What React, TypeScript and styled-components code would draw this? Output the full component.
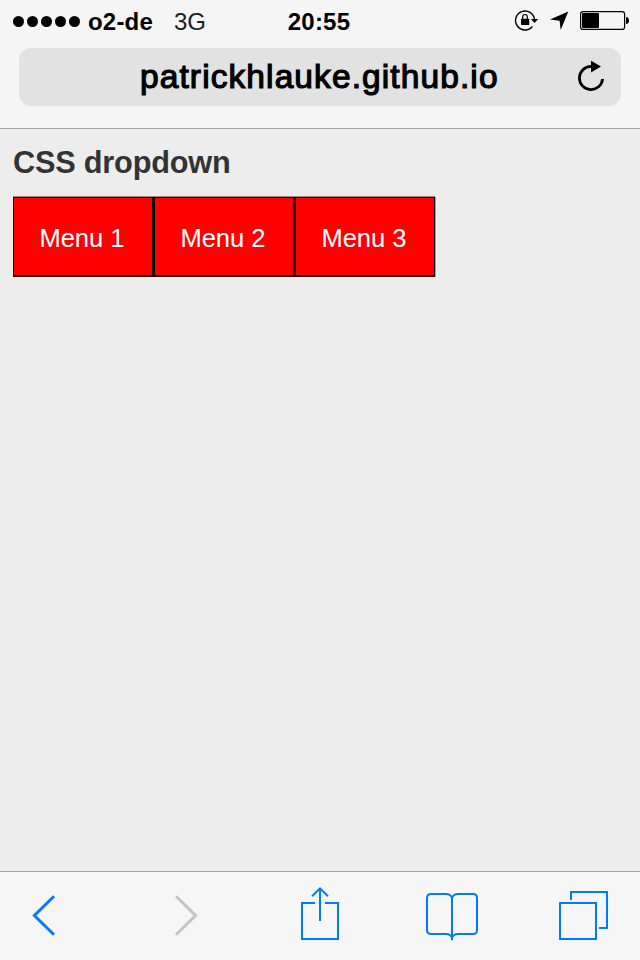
import React from 'react';
import styled, { createGlobalStyle } from 'styled-components';

const GlobalStyle = createGlobalStyle`
  * { box-sizing: border-box; }
  body { margin: 0; background: #ededed; font-family: "Liberation Sans", Arial, sans-serif; }
`;

const Screen = styled.div`
  width: 640px;
  height: 960px;
  display: flex;
  flex-direction: column;
  overflow: hidden;
`;

const BrowserHeader = styled.header`
  height: 129px;
  background: #f5f5f5;
  border-bottom: 1px solid #a5a6a6;
`;

const StatusBar = styled.div`
  height: 48px;
  display: grid;
  grid-template-columns: 274px 90px 276px;
  align-items: start;
`;

const StatusGroup = styled.div`
  display: flex;
  height: 42px;
  align-items: center;
`;

const Carrier = styled(StatusGroup)`
  padding-left: 13px;
`;

const SignalDots = styled.div`
  display: flex;
  gap: 3px;
  margin-right: 8px;
`;

const Dot = styled.span`
  width: 11px;
  height: 11px;
  border-radius: 50%;
  background: #000;
`;

const StatusText = styled.span<{ $bold?: boolean }>`
  font-size: 24px;
  font-weight: ${p => (p.$bold ? 700 : 400)};
  line-height: 43px;
  white-space: nowrap;
  letter-spacing: ${p => (p.$bold ? 0.2 : 0)}px;
  color: ${p => (p.$bold ? '#000' : '#1c1c1c')};
`;

const Network = styled(StatusText)`
  margin-left: 21px;
`;

const Clock = styled(StatusGroup)`
  justify-content: center;
`;

const Indicators = styled.svg`
  width: 125px;
  height: 42px;
  margin-left: 146px;
  display: block;
`;

const AddressBar = styled.div`
  height: 58px;
  margin: 0 19px;
  padding: 0 14px 0 121px;
  border-radius: 12px;
  background: #e2e2e2;
  display: flex;
  align-items: center;
  justify-content: space-between;
`;

const Address = styled.span`
  font-size: 33.5px;
  line-height: 58px;
  letter-spacing: 1.1px;
  -webkit-text-stroke: 1.2px #000;
`;

const ReloadIcon = styled.svg`
  width: 32px;
  height: 38px;
`;

const Page = styled.main`
  flex: 1;
  padding: 16px 13px 0;
`;

const Heading = styled.h1`
  margin: 0;
  height: 51px;
  font-size: 30.7px;
  line-height: 36px;
  color: #333;
  letter-spacing: -0.2px;
`;

const Menu = styled.nav`
  width: 422px;
  height: 81px;
  display: grid;
  grid-template-columns: 141px 141px 140px;
  border-top: 1px solid #9d8787;
`;

const MenuItem = styled.a<{ $last?: boolean }>`
  display: flex;
  padding: 21px 0 0 25.5px;
  font-size: 25.6px;
  line-height: 38px;
  letter-spacing: -0.1px;
  color: #fff;
  background: #f00;
  border: solid #000;
  border-width: 1px 1px 2px;
  border-bottom-color: #250000;
  border-right-color: ${p => (p.$last ? '#000' : '#350000')};
  box-shadow: ${p => (p.$last ? '1px 0 #b09a9a' : 'inset -1px 0 #150000')};
`;

const Toolbar = styled.footer`
  height: 89px;
  border-top: 1px solid #a5a6a6;
  background: #f6f6f6;
  display: grid;
  grid-template-columns: 110px 150px 120px 144px 116px;
`;

const ToolbarButton = styled.button`
  border: 0;
  padding: 0;
  background: none;
  display: flex;
`;

const ToolIcon = styled.svg<{ $disabled?: boolean }>`
  width: 100%;
  height: 88px;
  fill: none;
  stroke: ${p => (p.$disabled ? '#c4c4c4' : '#007aff')};
  stroke-width: 2;
`;

const menus = ['Menu 1', 'Menu 2', 'Menu 3'];

export default function App() {
  return (
    <>
      <GlobalStyle />
      <Screen>
        <BrowserHeader>
          <StatusBar>
            <Carrier>
              <SignalDots>{[0, 1, 2, 3, 4].map(n => <Dot key={n} />)}</SignalDots>
              <StatusText $bold>o2-de</StatusText>
              <Network>3G</Network>
            </Carrier>
            <Clock><StatusText $bold>20:55</StatusText></Clock>
            <Indicators viewBox="510 0 125 42">
              <path d="M532.4 26.5A9.5 9.5 0 1 1 534.5 19.5" fill="none" stroke="#000" strokeWidth="1.4" />
              <path d="M530.8 19h7.4l-3.7 4z" />
              <rect x="521" y="18.7" width="8.2" height="6.3" rx=".5" />
              <path d="M522.7 19v-2a2.3 2.5 0 0 1 4.6 0v2" fill="none" stroke="#000" strokeWidth="1.2" />
              <path d="M568.3 11.6l-18.3 8 9.6 1.2 1.1 9.2z" />
              <rect x="580.6" y="11.6" width="44" height="17.8" rx="2.5" fill="none" stroke="#000" strokeWidth="1.2" />
              <rect x="582" y="13" width="17" height="15" rx="1" />
              <path d="M626 17c4 0 4 7 0 7z" />
            </Indicators>
          </StatusBar>
          <AddressBar>
            <Address>patrickhlauke.github.io</Address>
            <ReloadIcon viewBox="575 58 32 38">
              <path d="M591 66.4A11.6 11.6 0 1 0 602.6 79" fill="none" stroke="#000" strokeWidth="2.8" />
              <path d="M591 60.8v11.8l10-6z" />
            </ReloadIcon>
          </AddressBar>
        </BrowserHeader>
        <Page>
          <Heading>CSS dropdown</Heading>
          <Menu>
            {menus.map((label, i) => <MenuItem key={label} $last={i === 2}>{label}</MenuItem>)}
          </Menu>
        </Page>
        <Toolbar>
          <ToolbarButton aria-label="Back">
            <ToolIcon viewBox="0 872 110 88"><path d="M54 896.2l-19.6 19.3 19.6 19.3" strokeWidth="3" /></ToolIcon>
          </ToolbarButton>
          <ToolbarButton aria-label="Forward" disabled>
            <ToolIcon $disabled viewBox="110 872 150 88"><path d="M176 896.2l19.6 19.3-19.6 19.3" strokeWidth="3" /></ToolIcon>
          </ToolbarButton>
          <ToolbarButton aria-label="Share">
            <ToolIcon viewBox="260 872 120 88">
              <path d="M315 903h-13v36h36v-36h-13M320 921v-32M312 896.3l8-8 8 8" />
            </ToolIcon>
          </ToolbarButton>
          <ToolbarButton aria-label="Bookmarks">
            <ToolIcon viewBox="380 872 144 88">
              <path d="M452 898c-1-3-3-4-6-4h-15q-4 0-4 4v32q0 4 4 4h15c3 0 5 1 6 4c1-3 3-4 6-4h15q4 0 4-4v-32q0-4-4-4h-15c-3 0-5 1-6 4v42" />
            </ToolIcon>
          </ToolbarButton>
          <ToolbarButton aria-label="Tabs">
            <ToolIcon viewBox="524 872 116 88">
              <path d="M560 903h36v36h-36zM571 900v-8h36v36h-8" />
            </ToolIcon>
          </ToolbarButton>
        </Toolbar>
      </Screen>
    </>
  );
}
